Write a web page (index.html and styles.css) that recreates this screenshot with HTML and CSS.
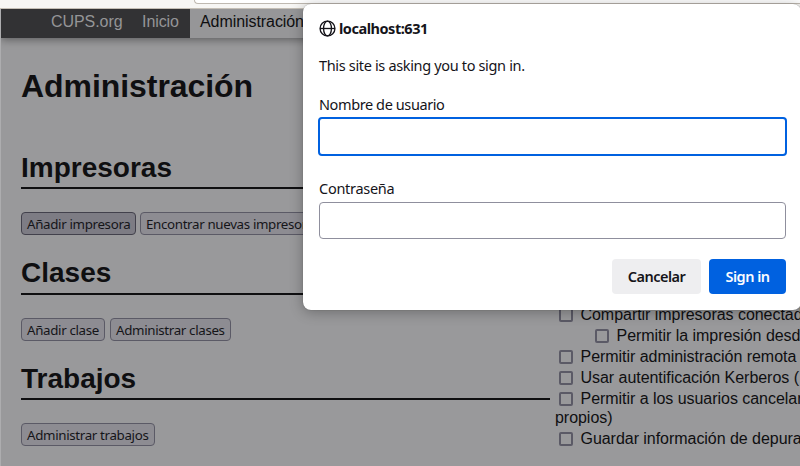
FILE: index.html
```html
<!DOCTYPE html>
<html lang="es">
<head>
<meta charset="utf-8">
<title>Administración - CUPS</title>
<link rel="stylesheet" href="styles.css">
</head>
<body>
<div class="toolbar"><div class="urlbar"></div></div>
<div class="page">
  <nav class="nav">
    <a class="cups">CUPS.org</a><a class="home">Inicio</a><a class="active">Administración</a>
  </nav>
  <main class="columns">
    <div class="left">
      <h1><span>Administración</span></h1>
      <section>
        <h2>Impresoras</h2>
        <div class="actions"><button class="btn b1 hover">Añadir impresora</button><button class="btn b2">Encontrar nuevas impresoras</button></div>
      </section>
      <section>
        <h2 class="second">Clases</h2>
        <div class="actions wide"><button class="btn b3">Añadir clase</button><button class="btn b4">Administrar clases</button></div>
      </section>
      <section>
        <h2 class="third">Trabajos</h2>
        <div class="actions"><button class="btn b5">Administrar trabajos</button></div>
      </section>
    </div>
    <div class="right">
      <div class="opt"><i class="check"></i>Compartir impresoras conectad</div>
      <div class="opt sub"><i class="check"></i>Permitir la impresión desd</div>
      <div class="opt"><i class="check"></i>Permitir administración remota</div>
      <div class="opt"><i class="check"></i>Usar autentificación Kerberos (</div>
      <div class="opt"><i class="check"></i>Permitir a los usuarios cancelar</div>
      <div class="cont">propios)</div>
      <div class="opt"><i class="check"></i>Guardar información de depura</div>
    </div>
  </main>
</div>
<form class="dialog">
  <div class="origin">
    <svg class="globe" viewBox="0 0 16 16" fill="none" stroke="#15141a" stroke-width="1.25"><circle cx="8" cy="8" r="7"/><ellipse cx="8" cy="8" rx="3.7" ry="7"/><path d="M1 8h14"/></svg>
    <strong>localhost:631</strong>
  </div>
  <p class="message">This site is asking you to sign in.</p>
  <label class="lab1">Nombre de usuario</label>
  <div class="field focused"></div>
  <label class="lab2">Contraseña</label>
  <div class="field"></div>
  <div class="buttons"><button type="button" class="cancel">Cancelar</button><button type="button" class="signin">Sign in</button></div>
</form>
</body>
</html>
```
FILE: styles.css
```css
* { box-sizing: border-box; }
body {
  margin: 0;
  width: 800px;
  height: 466px;
  overflow: hidden;
  position: relative;
  background: #99999b;
  color: #0f0f11;
  font-family: "Liberation Sans", sans-serif;
}
.toolbar {
  height: 9px;
  background: #f7f6f4;
  border-bottom: 1px solid #c5bfb6;
}
.urlbar {
  height: 4px;
  margin-left: 194px;
  background: #fff;
  border: 1px solid #bfb9b1;
  border-width: 0 0 1px 1px;
  border-radius: 0 0 0 4px;
}
.page {
  height: 457px;
  border-left: 1px solid #adadaf;
  overflow: hidden;
}
.nav {
  display: flex;
  width: 799px;
  height: 29px;
  background: #323234;
  box-shadow: 0 2px 8px rgba(0, 0, 0, .38);
  color: #959597;
  font-size: 16px;
  line-height: 25px;
  letter-spacing: -.07px;
  white-space: nowrap;
}
.cups { width: 91px; margin-left: 50px; }
.home { width: 48px; }
.active {
  flex: 1;
  padding-left: 10px;
  background: #969698;
  color: #0f0f11;
}
.columns { display: flex; }
.left { width: 549px; padding-left: 20px; flex: none; }
h1 { margin: 29px 0 0; height: 38px; font-size: 32px; line-height: 38px; letter-spacing: -.06px; }
h2 {
  margin: 44px 0 0;
  height: 40px;
  border-bottom: 2px solid #0f0f11;
  font-size: 28px;
  line-height: 37px;
}
.second { margin-top: 19px; height: 41px; }
.third { margin-top: 19px; height: 40px; line-height: 38px; }
.actions { display: flex; gap: 4px; padding-top: 23px; }
.wide { gap: 5px; }
.btn {
  height: 23px;
  flex: none;
  margin: 0;
  padding: 1px 5px 0;
  border: 1px solid #5b5a66;
  border-radius: 4px;
  background: #8d8c92;
  color: #151519;
  font: 13.333px/21px "Noto Sans", sans-serif;
  letter-spacing: -.34px;
  text-align: left;
  white-space: nowrap;
}
.hover { background: #7d7c84; border-color: #42414c; }
.b1 { width: 115px; }
.b3 { width: 84px; }
.b4 { width: 121px; }
.b5 { width: 134px; }
.right {
  flex: 1;
  min-width: 0;
  padding: 267px 0 0 5px;
  margin-top: -1px;
  font-size: 16px;
  line-height: 21px;
  letter-spacing: -.04px;
  white-space: nowrap;
}
.opt { display: flex; height: 21px; align-items: center; }
.sub { padding-left: 36px; }
.check {
  flex: none;
  width: 14px;
  height: 14px;
  margin: 1px 7.5px 0 4px;
  border: 2px solid #5b5a66;
  border-radius: 2px;
}
.cont { height: 19px; line-height: 17px; }
.dialog {
  position: absolute;
  left: 303px;
  top: 4px;
  width: 498px;
  height: 306px;
  padding: 16px 15px 16px 16px;
  border-radius: 8px;
  background: #fff;
  box-shadow: 0 2px 14px rgba(0, 0, 0, .3), 0 0 1px rgba(0, 0, 0, .4);
  color: #15141a;
  font: 14.5px/20px "Noto Sans", sans-serif;
  letter-spacing: -.34px;
}
.origin { display: flex; height: 17px; align-items: center; gap: 3px; }
.origin strong { line-height: 18px; height: 20px; letter-spacing: -.47px; }
.globe { width: 17px; height: 17px; }
.message { margin: 18px 0 0; height: 20px; }
label { display: block; height: 20px; }
.lab1 { margin-top: 19px; letter-spacing: -.4px; }
.lab2 { margin-top: 22px; letter-spacing: -.28px; }
.field {
  width: 467px;
  height: 37px;
  margin-top: 4px;
  border: 1px solid #8f8f9d;
  border-radius: 4px;
}
.focused { width: 469px; height: 39px; margin: 3px 0 0 -1px; border: 2px solid #0061e0; }
.buttons { display: flex; justify-content: flex-end; gap: 8px; margin: 20px 0 0; }
.buttons button {
  height: 35px;
  padding: 0;
  border: 0;
  border-radius: 4px;
  font: 600 14.5px/35px "Noto Sans", sans-serif;
  letter-spacing: -.5px;
}
.cancel { width: 89px; background: #eeeef0; color: #15141a; }
.signin { width: 77px; background: #0061e0; color: #fbfbfe; }
```
